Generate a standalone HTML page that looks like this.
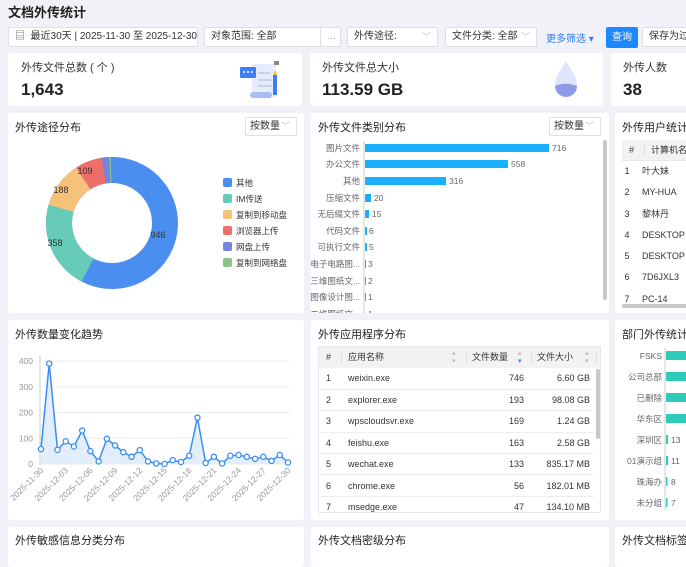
<!DOCTYPE html><html><head><meta charset="utf-8"><style>
*{box-sizing:border-box;margin:0;padding:0}
body{width:686px;height:554px;overflow:hidden;background:#f0f2f7;font-family:"Liberation Sans","Noto Sans CJK SC",sans-serif;color:#333;position:relative;font-size:10px}
.a{position:absolute}
.card{position:absolute;background:#fff;border-radius:3px;overflow:hidden}
.t{position:absolute;left:7px;top:6px;font-size:11px;color:#222}
.box{position:absolute;background:#fff;border:1px solid #dcdfe6;border-radius:2px;height:20px;line-height:18px;padding-left:6px;font-size:10px;color:#333;white-space:nowrap;overflow:hidden}
.chev{position:absolute;right:6px;top:0;color:#bbb;font-size:9px}
.sel{position:absolute;border:1px solid #dcdfe6;border-radius:2px;height:19px;line-height:17px;padding-left:4px;font-size:10px;width:52px;background:#fff}
table{border-collapse:collapse;font-size:9px}
</style></head><body>
<div class="a" style="left:8px;top:2px;font-size:13px;font-weight:bold;color:#222">文档外传统计</div>
<div class="box" style="left:8px;top:27px;width:190px"><span style="color:#666">▤</span>&nbsp; 最近30天 | 2025-11-30 至 2025-12-30</div>
<div class="box" style="left:204px;top:27px;width:137px">对象范围: 全部<span style="position:absolute;left:115px;top:0;width:22px;height:18px;border-left:1px solid #dcdfe6;text-align:center;color:#aaa">...</span></div>
<div class="box" style="left:347px;top:27px;width:91px">外传途径:<span class="chev">﹀</span></div>
<div class="box" style="left:445px;top:27px;width:92px">文件分类: 全部<span class="chev">﹀</span></div>
<div class="a" style="left:546px;top:30px;color:#2f7bf5;font-size:10px">更多筛选 ▾</div>
<div class="a" style="left:606px;top:27px;width:32px;height:21px;background:#1e88ff;border-radius:2px;color:#fff;text-align:center;line-height:21px">查询</div>
<div class="box" style="left:642px;top:27px;width:60px">保存为过</div>

<div class="card" style="left:8px;top:53px;width:294px;height:53px"><div class="a" style="left:13px;top:6px;font-size:11px">外传文件总数 ( 个 )</div><div class="a" style="left:13px;top:27px;font-size:17px;font-weight:bold;color:#222">1,643</div>
<svg class="a" style="left:230px;top:5px" width="50" height="46"><rect x="14" y="6" width="24" height="33" rx="2" fill="#e6ecfb"/><rect x="12" y="34" width="22" height="6" rx="3" fill="#a9bdf4"/><rect x="20" y="14" width="12" height="2" fill="#c9d3e8"/><rect x="20" y="21" width="14" height="2" fill="#c9d3e8"/><rect x="20" y="27" width="14" height="2" fill="#c9d3e8"/><rect x="2" y="9" width="16" height="11" rx="1" fill="#3d7df5"/><circle cx="6" cy="14" r="1" fill="#fff"/><circle cx="10" cy="14" r="1" fill="#fff"/><circle cx="14" cy="14" r="1" fill="#fff"/><rect x="35" y="17" width="4" height="20" fill="#3d7df5"/><path d="M35 17l2-5 2 5z" fill="#f6b73c"/><rect x="36" y="3" width="5" height="4" fill="#888"/></svg></div>
<div class="card" style="left:310px;top:53px;width:293px;height:53px"><div class="a" style="left:12px;top:6px;font-size:11px">外传文件总大小</div><div class="a" style="left:12px;top:27px;font-size:17px;font-weight:bold;color:#222">113.59 GB</div>
<svg class="a" style="left:236px;top:6px" width="40" height="42"><path d="M20 2C14 12 9 18 9 26a11 11 0 0 0 22 0c0-8-5-14-11-24z" fill="#dfe5fb"/><path d="M9 27c6-3 14-3 22 0a11 11 0 0 1-22 0z" fill="#8c9ae8"/></svg></div>
<div class="card" style="left:611px;top:53px;width:80px;height:53px"><div class="a" style="left:12px;top:6px;font-size:11px">外传人数</div><div class="a" style="left:12px;top:27px;font-size:17px;font-weight:bold;color:#222">38</div></div>

<!-- row2 -->
<div class="card" style="left:8px;top:113px;width:296px;height:200px"><div class="t">外传途径分布</div><div class="sel" style="left:237px;top:4px">按数量<span class="chev">﹀</span></div>
<svg class="a" style="left:0;top:0" width="296" height="200">
<g transform="translate(104,110)">
<circle r="53" fill="none" stroke="#4a8ef0" stroke-width="26"/>
<g transform="rotate(-90)">
<circle r="53" fill="none" stroke="#66cbb8" stroke-width="26" stroke-dasharray="72.6 333" stroke-dashoffset="-191.7"/>
<circle r="53" fill="none" stroke="#f6c27a" stroke-width="26" stroke-dasharray="38.1 333" stroke-dashoffset="-264.3"/>
<circle r="53" fill="none" stroke="#ee6e6a" stroke-width="26" stroke-dasharray="22.1 333" stroke-dashoffset="-302.4"/>
<circle r="53" fill="none" stroke="#7285e0" stroke-width="26" stroke-dasharray="6 333" stroke-dashoffset="-324.5"/>
<circle r="53" fill="none" stroke="#8ac48a" stroke-width="26" stroke-dasharray="1.2 333" stroke-dashoffset="-330.5"/></g>
<text x="46" y="15" font-size="9" fill="#333" text-anchor="middle">946</text><text x="-57" y="23" font-size="9" fill="#333" text-anchor="middle">358</text><text x="-51" y="-30" font-size="9" fill="#333" text-anchor="middle">188</text><text x="-27" y="-49" font-size="9" fill="#333" text-anchor="middle">109</text></g>
<g font-size="8.5" fill="#333"><rect x="215" y="65" width="9" height="9" rx="2" fill="#4a8ef0"/><text x="228" y="73">其他</text>
<rect x="215" y="81" width="9" height="9" rx="2" fill="#66cbb8"/><text x="228" y="89">IM传送</text>
<rect x="215" y="97" width="9" height="9" rx="2" fill="#f6c27a"/><text x="228" y="105">复制到移动盘</text>
<rect x="215" y="113" width="9" height="9" rx="2" fill="#ee6e6a"/><text x="228" y="121">浏览器上传</text>
<rect x="215" y="129" width="9" height="9" rx="2" fill="#7285e0"/><text x="228" y="137">网盘上传</text>
<rect x="215" y="145" width="9" height="9" rx="2" fill="#8ac48a"/><text x="228" y="153">复制到网络盘</text></g></svg></div>

<div class="card" style="left:311px;top:113px;width:298px;height:200px"><div class="t">外传文件类别分布</div><div class="sel" style="left:238px;top:4px">按数量<span class="chev">﹀</span></div>
<svg class="a" style="left:0;top:0" width="298" height="200"><line x1="53" y1="28" x2="53" y2="200" stroke="#ccc"/>
<g font-size="8.5" fill="#666" text-anchor="end">
<text x="49" y="38">图片文件</text><text x="49" y="54">办公文件</text><text x="49" y="71">其他</text><text x="49" y="88">压缩文件</text><text x="49" y="104">无后缀文件</text><text x="49" y="121">代码文件</text><text x="49" y="137">可执行文件</text><text x="49" y="154">电子电路图...</text><text x="49" y="171">三维图纸文...</text><text x="49" y="187">图像设计图...</text><text x="49" y="204">二维图纸文...</text></g>
<g fill="#1ab0fb"><rect x="54" y="31" width="184" height="8"/><rect x="54" y="47" width="143" height="8"/><rect x="54" y="64" width="81" height="8"/><rect x="54" y="81" width="6" height="8"/><rect x="54" y="97" width="4" height="8"/><rect x="54" y="114" width="2" height="8"/><rect x="54" y="130" width="2" height="8"/><rect x="54" y="147" width="1" height="8"/><rect x="54" y="164" width="1" height="8"/><rect x="54" y="180" width="1" height="8"/></g>
<g font-size="8.5" fill="#666"><text x="241" y="38">716</text><text x="200" y="54">558</text><text x="138" y="71">316</text><text x="63" y="88">20</text><text x="61" y="104">15</text><text x="58" y="121">6</text><text x="58" y="137">5</text><text x="57" y="154">3</text><text x="57" y="171">2</text><text x="57" y="187">1</text><text x="57" y="204">1</text></g>
<rect x="292" y="27" width="4" height="160" rx="2" fill="#c8c8c8"/></svg></div>

<div class="card" style="left:615px;top:113px;width:80px;height:200px"><div class="t">外传用户统计</div>
<div class="a" style="left:7px;top:27px;width:80px;height:21px;background:#f2f2f2;border-bottom:1px solid #e8e8e8;font-size:9px;line-height:21px"><span style="margin-left:7px">#</span><span style="position:absolute;left:22px;top:5px;height:11px;border-left:1px solid #ddd"></span><span style="position:absolute;left:29px">计算机名称</span></div>
<div class="a" style="left:7px;top:48px;font-size:9px;line-height:21.3px;color:#333"><div>&nbsp;1 &nbsp;&nbsp;&nbsp;&nbsp;叶大妹</div><div>&nbsp;2 &nbsp;&nbsp;&nbsp;&nbsp;MY-HUA</div><div>&nbsp;3 &nbsp;&nbsp;&nbsp;&nbsp;黎林丹</div><div>&nbsp;4 &nbsp;&nbsp;&nbsp;&nbsp;DESKTOP</div><div>&nbsp;5 &nbsp;&nbsp;&nbsp;&nbsp;DESKTOP</div><div>&nbsp;6 &nbsp;&nbsp;&nbsp;&nbsp;7D6JXL3</div><div>&nbsp;7 &nbsp;&nbsp;&nbsp;&nbsp;PC-14</div></div>
<div class="a" style="left:7px;top:191px;width:80px;height:4px;background:#c8c8c8;border-radius:2px"></div></div>

<!-- row3 -->
<div class="card" style="left:8px;top:320px;width:296px;height:200px"><div class="t">外传数量变化趋势</div>
<svg class="a" style="left:-8px;top:-320px" width="304" height="520" id="lc"></svg></div>

<div class="card" style="left:311px;top:320px;width:298px;height:200px"><div class="t">外传应用程序分布</div>
<div class="a" style="left:7px;top:26px;width:283px;height:167px;border:1px solid #e8e8e8;overflow:hidden">
<div style="height:21px;background:#f2f2f2;position:relative;font-size:9px;line-height:21px;color:#333"><span class="a" style="left:7px">#</span><span class="a" style="left:22px;top:5px;height:11px;border-left:1px solid #ddd"></span><span class="a" style="left:29px">应用名称</span><span class="a" style="left:133px;color:#bbb;font-size:7px;line-height:8px;top:3px">▴<br>▾</span><span class="a" style="left:147px;top:5px;height:11px;border-left:1px solid #ddd"></span><span class="a" style="left:153px">文件数量</span><span class="a" style="left:199px;color:#bbb;font-size:7px;line-height:8px;top:3px">▴<br><span style="color:#2f7bf5">▾</span></span><span class="a" style="left:212px;top:5px;height:11px;border-left:1px solid #ddd"></span><span class="a" style="left:218px">文件大小</span><span class="a" style="left:266px;color:#bbb;font-size:7px;line-height:8px;top:3px">▴<br>▾</span><span class="a" style="left:277px;top:5px;height:11px;border-left:1px solid #ddd"></span></div>
<table style="width:275px"><tbody>
<tr style="height:21.4px;border-bottom:1px solid #eee"><td style="width:29px;padding-left:7px">1</td><td>weixin.exe</td><td style="text-align:right;width:60px">746</td><td style="text-align:right;width:70px;padding-right:4px">6.60 GB</td></tr>
<tr style="height:21.4px;border-bottom:1px solid #eee"><td style="padding-left:7px">2</td><td>explorer.exe</td><td style="text-align:right">193</td><td style="text-align:right;padding-right:4px">98.08 GB</td></tr>
<tr style="height:21.4px;border-bottom:1px solid #eee"><td style="padding-left:7px">3</td><td>wpscloudsvr.exe</td><td style="text-align:right">169</td><td style="text-align:right;padding-right:4px">1.24 GB</td></tr>
<tr style="height:21.4px;border-bottom:1px solid #eee"><td style="padding-left:7px">4</td><td>feishu.exe</td><td style="text-align:right">163</td><td style="text-align:right;padding-right:4px">2.58 GB</td></tr>
<tr style="height:21.4px;border-bottom:1px solid #eee"><td style="padding-left:7px">5</td><td>wechat.exe</td><td style="text-align:right">133</td><td style="text-align:right;padding-right:4px">835.17 MB</td></tr>
<tr style="height:21.4px;border-bottom:1px solid #eee"><td style="padding-left:7px">6</td><td>chrome.exe</td><td style="text-align:right">56</td><td style="text-align:right;padding-right:4px">182.01 MB</td></tr>
<tr style="height:21.4px"><td style="padding-left:7px">7</td><td>msedge.exe</td><td style="text-align:right">47</td><td style="text-align:right;padding-right:4px">134.10 MB</td></tr></tbody></table>
<div class="a" style="left:277px;top:22px;width:4px;height:70px;background:#c8c8c8;border-radius:2px"></div></div></div>

<div class="card" style="left:615px;top:320px;width:80px;height:200px"><div class="t">部门外传统计</div>
<svg class="a" style="left:0;top:0" width="80" height="200"><line x1="50" y1="28" x2="50" y2="190" stroke="#ccc"/>
<g font-size="8.5" fill="#666" text-anchor="end"><text x="47" y="39">FSKS</text><text x="47" y="60">公司总部</text><text x="47" y="81">已删除</text><text x="47" y="102">华东区</text><text x="47" y="123">深圳区</text><text x="47" y="144">01演示组</text><text x="47" y="165">珠海办</text><text x="47" y="186">未分组</text></g>
<g fill="#2ecbb8"><rect x="51" y="31" width="30" height="9"/><rect x="51" y="52" width="30" height="9"/><rect x="51" y="73" width="30" height="9"/><rect x="51" y="94" width="30" height="9"/><rect x="51" y="115" width="2" height="9"/><rect x="51" y="136" width="2" height="9"/><rect x="51" y="157" width="1.5" height="9"/><rect x="51" y="178" width="1.5" height="9"/></g>
<g font-size="8.5" fill="#666"><text x="56" y="123">13</text><text x="56" y="144">11</text><text x="56" y="165">8</text><text x="56" y="186">7</text></g></svg></div>

<div class="card" style="left:8px;top:527px;width:296px;height:40px"><div class="t" style="top:5px">外传敏感信息分类分布</div></div>
<div class="card" style="left:311px;top:527px;width:298px;height:40px"><div class="t" style="top:5px">外传文档密级分布</div></div>
<div class="card" style="left:615px;top:527px;width:80px;height:40px"><div class="t" style="top:5px">外传文档标签</div></div>

<script>
var v=[58,390,55,88,68,130,50,10,98,72,46,28,54,10,2,0,15,8,32,180,4,28,2,32,35,28,20,28,12,35,6];
var s='',x0=41,x1=288,y0=464,k=103/400,pts=[];
for(var i=0;i<=4;i++){var y=y0-i*100*k;s+='<line x1="40" y1="'+y+'" x2="290" y2="'+y+'" stroke="#eee"/><text x="33" y="'+(y+3)+'" font-size="8.5" fill="#999" text-anchor="end">'+(i*100)+'</text>';}
s+='<line x1="40" y1="355" x2="40" y2="465" stroke="#ccc"/>';
for(i=0;i<31;i++){pts.push([x0+i*(x1-x0)/30,y0-v[i]*k]);}
var p=pts.map(function(a){return a[0].toFixed(1)+','+a[1].toFixed(1)}).join(' ');
s+='<polygon points="'+x0+','+y0+' '+p+' '+x1+','+y0+'" fill="#e3eefc"/><polyline points="'+p+'" fill="none" stroke="#3a8ef3" stroke-width="1.5"/>';
pts.forEach(function(a){s+='<circle cx="'+a[0]+'" cy="'+a[1]+'" r="2.6" fill="#fff" stroke="#3a8ef3" stroke-width="1.3"/>';});
var L=['2025-11-30','2025-12-03','2025-12-06','2025-12-09','2025-12-12','2025-12-15','2025-12-18','2025-12-21','2025-12-24','2025-12-27','2025-12-30'];
for(i=0;i<11;i++){var x=pts[i*3][0]+3;s+='<text transform="translate('+x+',471) rotate(-45)" font-size="8.5" fill="#999" text-anchor="end">'+L[i]+'</text>';}
document.getElementById('lc').innerHTML=s;
</script>
</body></html>
